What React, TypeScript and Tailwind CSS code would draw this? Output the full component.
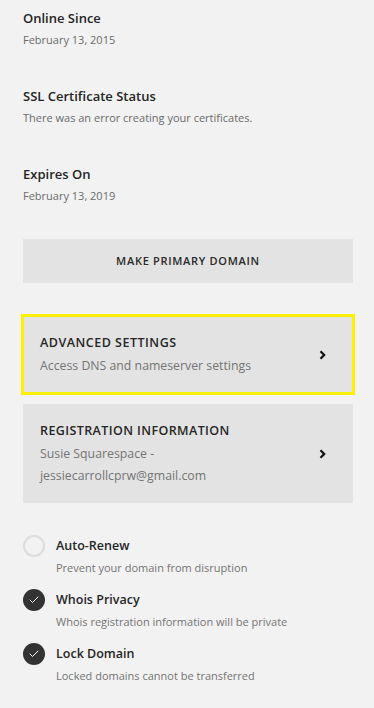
import { Check } from 'lucide-react';

const details = [
  { title: 'Online Since', value: 'February 13, 2015' },
  { title: 'SSL Certificate Status', value: 'There was an error creating your certificates.' },
  { title: 'Expires On', value: 'February 13, 2019' },
];

const toggles = [
  { label: 'Auto-Renew', hint: 'Prevent your domain from disruption', on: false },
  { label: 'Whois Privacy', hint: 'Whois registration information will be private', on: true },
  { label: 'Lock Domain', hint: 'Locked domains cannot be transferred', on: true },
];

function Chevron() {
  return (
    <svg width="7" height="10" viewBox="0 0 7 10" className="shrink-0">
      <path d="M1.5 1.2 L5.2 5 L1.5 8.8" fill="none" stroke="#111" strokeWidth="2.2" />
    </svg>
  );
}

export default function App() {
  return (
    <div className="min-h-[708px] w-[374px] bg-[#f2f2f2] pl-[23px] pr-[21px] pt-[8px] font-['Open_Sans',sans-serif]">
      {/* Domain details */}
      <div className="flex flex-col gap-[38px]">
        {details.map((d) => (
          <div key={d.title}>
            <p className="text-[13px] leading-[20px] font-semibold text-[#242424]">{d.title}</p>
            <p className="mt-[4px] text-[11px] leading-[16px] text-[#6b6b6b]">{d.value}</p>
          </div>
        ))}
      </div>

      <button className="mt-[35px] h-[44px] w-full bg-[#e3e3e3] text-[11px] font-semibold tracking-[0.7px] text-[#2a2a2a]">
        MAKE PRIMARY DOMAIN
      </button>

      {/* Link cards */}
      <div className="mt-[33px] flex flex-col gap-[11px]">
        <div className="flex h-[77px] items-center justify-between bg-[#e3e3e3] pl-[17px] pr-[27px] outline-[3px] outline-solid outline-[#fff000] -outline-offset-1">
          <div>
            <p className="text-[12.5px] leading-[20px] font-semibold tracking-[0.5px] text-[#262626]">ADVANCED SETTINGS</p>
            <p className="mt-[3px] text-[12.3px] leading-[20px] text-[#747474]">Access DNS and nameserver settings</p>
          </div>
          <Chevron />
        </div>
        <div className="flex h-[99px] items-center justify-between bg-[#e3e3e3] pl-[17px] pr-[27px]">
          <div>
            <p className="text-[12.5px] leading-[20px] font-semibold tracking-[0.4px] text-[#262626]">REGISTRATION INFORMATION</p>
            <p className="mt-[2px] text-[12.3px] leading-[22px] text-[#747474]">
              Susie Squarespace -<br />
              jessiecarrollcprw@gmail.com
            </p>
          </div>
          <Chevron />
        </div>
      </div>

      {/* Toggles */}
      <div className="mt-[32px] flex flex-col gap-[11px]">
        {toggles.map((t) => (
          <div key={t.label} className="flex gap-[11px]">
            <div
              className={
                t.on
                  ? 'flex h-[22px] w-[22px] shrink-0 items-center justify-center rounded-full bg-[#333333]'
                  : 'h-[22px] w-[22px] shrink-0 rounded-full border-2 border-[#dcdcdc]'
              }
            >
              {t.on && <Check className="h-[12px] w-[12px] text-white" strokeWidth={2} />}
            </div>
            <div>
              <p className="text-[12.5px] leading-[22px] font-semibold text-[#262626]">{t.label}</p>
              <p className="mt-[1px] text-[11px] leading-[20px] text-[#747474]">{t.hint}</p>
            </div>
          </div>
        ))}
      </div>
    </div>
  );
}
